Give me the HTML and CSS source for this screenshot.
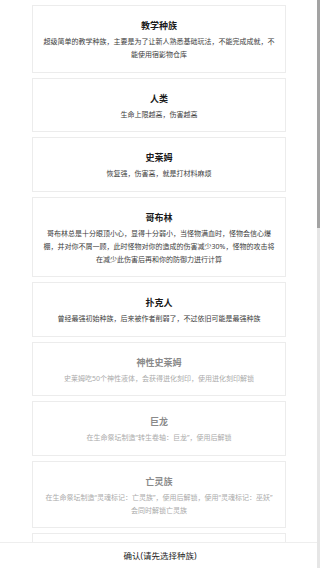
FILE: index.html
```html
<!DOCTYPE html>
<html lang="zh-CN">
<head>
  <meta charset="UTF-8">
  <meta name="viewport" content="width=device-width, initial-scale=1.0">
  <title>选择种族</title>
  <link rel="stylesheet" href="styles.css">
</head>
<body>

  <div class="page">
    <!-- 种族列表 -->
    <div class="race-list">
      <div class="race-card">
        <div class="race-name">教学种族</div>
        <div class="race-desc">超级简单的教学种族，主要是为了让新人熟悉基础玩法，不能完成成就，不能使用宿影物仓库</div>
      </div>
      <div class="race-card">
        <div class="race-name">人类</div>
        <div class="race-desc">生命上限越高，伤害越高</div>
      </div>
      <div class="race-card">
        <div class="race-name">史莱姆</div>
        <div class="race-desc">恢复强，伤害高，就是打材料麻烦</div>
      </div>
      <div class="race-card">
        <div class="race-name">哥布林</div>
        <div class="race-desc">哥布林总是十分眼顶小心，显得十分弱小，当怪物满血时，怪物会信心爆棚，并对你不屑一顾，此时怪物对你的造成的伤害减少30%，怪物的攻击将在减少此伤害后再和你的防御力进行计算</div>
      </div>
      <div class="race-card">
        <div class="race-name">扑克人</div>
        <div class="race-desc">曾经最强初始种族，后来被作者削弱了，不过依旧可能是最强种族</div>
      </div>
      <div class="race-card locked">
        <div class="race-name">神性史莱姆</div>
        <div class="race-desc">史莱姆吃50个神性液体，会获得进化刻印，使用进化刻印解锁</div>
      </div>
      <div class="race-card locked">
        <div class="race-name">巨龙</div>
        <div class="race-desc">在生命祭坛制造“转生卷轴：巨龙”，使用后解锁</div>
      </div>
      <div class="race-card locked">
        <div class="race-name">亡灵族</div>
        <div class="race-desc">在生命祭坛制造“灵魂标记：亡灵族”，使用后解锁，使用“灵魂标记：巫妖”会同时解锁亡灵族</div>
      </div>
      <!-- next card, scrolled under the bar -->
      <div class="race-card locked next"></div>
    </div>

    <!-- 底部确认 -->
    <div class="confirm-bar">确认(请先选择种族)</div>
  </div>

  <div class="scroll-track"><div class="scroll-thumb"></div></div>

</body>
</html>
```

FILE: styles.css
```css
html, body {
  height: 100%;
}
body {
  font-family: "Noto Sans", "Noto Sans CJK SC", sans-serif;
  margin: 0;
  padding: 0;
  background-color: #fff;
  overflow: hidden;
}
.page {
  height: 100%;
  display: flex;
  flex-direction: column;
}
.race-list {
  flex: 1;
  overflow: hidden;
  padding: 5px 34px 0 32px;
  display: flex;
  flex-direction: column;
  gap: 5px;
}
.race-card {
  flex-shrink: 0;
  border: 1px solid #ececec;
  padding: 13px 9px 10.5px;
  text-align: center;
  background: #fff;
}
.race-card.next {
  height: 60px;
}
.race-name {
  font-size: 9px;
  line-height: 13px;
  font-weight: bold;
  color: #1a1a1a;
}
.race-desc {
  margin-top: 3px;
  font-size: 7px;
  line-height: 13px;
  color: #3c3c3c;
}
.race-card.locked .race-name {
  color: #8a8a8a;
}
.race-card.locked .race-desc {
  color: #ababab;
}
.confirm-bar {
  flex-shrink: 0;
  height: 26px;
  line-height: 25px;
  text-align: center;
  font-size: 8.5px;
  color: #222;
  background: #fff;
  border-top: 1px solid #eee;
  box-sizing: border-box;
}
.scroll-track {
  position: fixed;
  top: 0;
  right: 0;
  width: 3px;
  height: 100%;
  background: #e6e6e6;
}
.scroll-thumb {
  height: 228px;
  background: #a3a3a3;
}
```
